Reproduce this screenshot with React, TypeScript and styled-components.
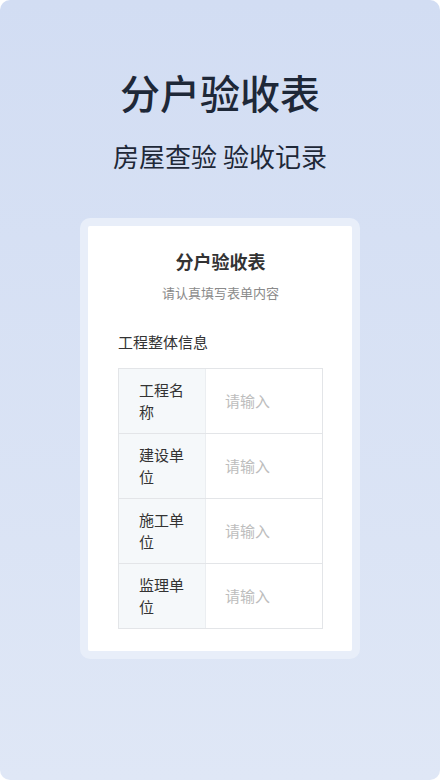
import React from 'react';
import styled, { createGlobalStyle } from 'styled-components';

const GlobalStyle = createGlobalStyle`
  html, body {
    margin: 0;
    padding: 0;
    background: #ffffff;
  }
  body {
    font-family: "Noto Sans CJK SC", "Noto Sans", sans-serif;
  }
  * {
    box-sizing: border-box;
  }
`;

const Page = styled.div`
  width: 440px;
  height: 780px;
  border-radius: 10px;
  background: linear-gradient(180deg, #d2ddf3 0%, #dfe7f6 100%);
  display: flex;
  flex-direction: column;
  align-items: center;
  padding-top: 64px;
  overflow: hidden;
`;

const HeroTitle = styled.h1`
  margin: 0;
  font-size: 40px;
  line-height: 56px;
  font-weight: 500;
  color: #1e2838;
`;

const HeroSubtitle = styled.p`
  margin: 18px 0 0;
  font-size: 26px;
  line-height: 36px;
  font-weight: 400;
  color: #1e2838;
`;

const CardFrame = styled.div`
  margin-top: 44px;
  width: 280px;
  padding: 8px;
  border-radius: 10px;
  background: #e8eef9;
`;

const Card = styled.div`
  background: #ffffff;
  border-radius: 2px;
  padding: 22px 29px 22px 30px;
  display: flex;
  flex-direction: column;
`;

const CardTitle = styled.h2`
  margin: 0;
  text-align: center;
  font-size: 18px;
  line-height: 26px;
  font-weight: 700;
  color: #333333;
`;

const CardHint = styled.p`
  margin: 9px 0 0;
  text-align: center;
  font-size: 13px;
  line-height: 20px;
  color: #8a8a8a;
`;

const SectionTitle = styled.h3`
  margin: 28px 0 0;
  font-size: 15px;
  line-height: 22px;
  font-weight: 400;
  color: #333333;
`;

const Table = styled.div`
  margin-top: 15px;
  border: 1px solid #e3e5e8;
  display: flex;
  flex-direction: column;
`;

const Row = styled.div<{ $first?: boolean }>`
  display: grid;
  grid-template-columns: 87px 1fr;
  height: ${p => (p.$first ? 64 : 65)}px;
  border-top: ${p => (p.$first ? 'none' : '1px solid #e3e5e8')};
`;

const LabelCell = styled.div`
  background: #f5f8fa;
  border-right: 1px solid #ebeef1;
  padding: 0 20px;
  display: flex;
  align-items: center;
  font-size: 15px;
  line-height: 22px;
  color: #333333;
  word-break: break-all;
`;

const ValueCell = styled.div`
  display: flex;
  align-items: center;
  padding: 0 0 0 19px;
`;

const Field = styled.input`
  width: 100%;
  border: none;
  outline: none;
  background: transparent;
  padding: 0;
  font-family: inherit;
  font-size: 15px;
  line-height: 22px;
  color: #333333;

  &::placeholder {
    color: #bdbdbd;
  }
`;

const fields = ['工程名称', '建设单位', '施工单位', '监理单位'];

export default function App() {
  return (
    <>
      <GlobalStyle />
      <Page>
        <HeroTitle>分户验收表</HeroTitle>
        <HeroSubtitle>房屋查验 验收记录</HeroSubtitle>

        <CardFrame>
          <Card>
            <CardTitle>分户验收表</CardTitle>
            <CardHint>请认真填写表单内容</CardHint>

            <SectionTitle>工程整体信息</SectionTitle>
            <Table>
              {fields.map((label, i) => (
                <Row key={label} $first={i === 0}>
                  <LabelCell>{label}</LabelCell>
                  <ValueCell>
                    <Field placeholder="请输入" />
                  </ValueCell>
                </Row>
              ))}
            </Table>
          </Card>
        </CardFrame>
      </Page>
    </>
  );
}
